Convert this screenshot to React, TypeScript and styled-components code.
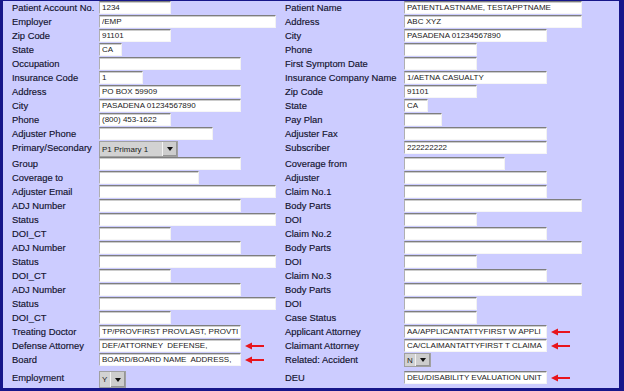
import React from 'react';
import styled, { createGlobalStyle } from 'styled-components';

const GlobalStyle = createGlobalStyle`
  html, body { margin: 0; padding: 0; background: #ccccff; }
  body { font-family: "Liberation Sans", Arial, sans-serif; }
  * { box-sizing: border-box; }
`;

const Frame = styled.div`
  width: 624px;
  height: 391px;
  overflow: hidden;
  background: #ccccff;
  border-style: solid;
  border-color: #16168a;
  border-width: 1px 5px 3px 3px;
  padding: 0 1px 0 9px;
  display: flex;
  flex-direction: column;
`;

const Row = styled.div<{ $h: number; $pad: number }>`
  display: grid;
  grid-template-columns: 87px 186px 119px 214px;
  height: ${(p) => p.$h}px;
  padding-top: ${(p) => p.$pad}px;
  align-items: start;
`;

const Label = styled.div`
  font-size: 9.4px;
  line-height: 14px;
  color: #12122e;
  white-space: nowrap;
  -webkit-text-stroke: 0.15px #12122e;
`;

const FieldCell = styled.div`
  display: flex;
  align-items: flex-start;
  gap: 4px;
`;

const TextBox = styled.input<{ $w: number }>`
  width: ${(p) => p.$w}px;
  height: 13px;
  margin: 0;
  padding: 0 2px;
  background: #ffffff;
  border-style: solid;
  border-width: 1px;
  border-color: #7e7e7e #f2f2f2 #f6f6f6 #b0b0b0;
  box-shadow: inset 0 1px 0 #cccccc;
  font-family: "Liberation Sans", Arial, sans-serif;
  font-size: 8px;
  color: #1a1a1a;
  outline: none;
`;

const SelectBox = styled.div<{ $h: number }>`
  display: inline-flex;
  height: ${(p) => p.$h}px;
  border: 1px solid #a0a0a0;
  background: #d2d2d2;
`;

const SelectValue = styled.div<{ $w: number }>`
  width: ${(p) => p.$w}px;
  display: flex;
  align-items: center;
  padding-left: 2px;
  font-size: 8px;
  color: #1a1a1a;
  white-space: nowrap;
  overflow: hidden;
`;

const SelectButton = styled.div`
  width: 15px;
  display: flex;
  align-items: center;
  justify-content: center;
  background: #cdcdcd;
  border-left: 1px solid #f2f2f2;
  box-shadow: inset -1px -1px 0 #959595;
`;

const Caret = styled.span`
  width: 0;
  height: 0;
  border-left: 3.5px solid transparent;
  border-right: 3.5px solid transparent;
  border-top: 4px solid #111;
`;

const ArrowMark = styled.svg`
  align-self: center;
  flex: none;
`;

type Field =
  | { kind: 'text'; w: number; v?: string; arrow?: boolean }
  | { kind: 'select'; vw: number; v: string; h: number; arrow?: boolean };

const t = (w: number, v = '', arrow = false): Field => ({ kind: 'text', w, v, arrow });
const s = (vw: number, v: string, h: number): Field => ({ kind: 'select', vw, v, h });

type RowDef = { l: string; lf: Field; r: string; rf: Field; h?: number; pad?: number };

const rows: RowDef[] = [
  { l: 'Patient Account No.', lf: t(72, '1234'), r: 'Patient Name', rf: t(178, 'PATIENTLASTNAME, TESTAPPTNAME') },
  { l: 'Employer', lf: t(177, '/EMP'), r: 'Address', rf: t(178, 'ABC XYZ') },
  { l: 'Zip Code', lf: t(72, '91101'), r: 'City', rf: t(143, 'PASADENA 01234567890') },
  { l: 'State', lf: t(23, 'CA'), r: 'Phone', rf: t(73) },
  { l: 'Occupation', lf: t(142), r: 'First Symptom Date', rf: t(73) },
  { l: 'Insurance Code', lf: t(44, '1'), r: 'Insurance Company Name', rf: t(143, '1/AETNA CASUALTY') },
  { l: 'Address', lf: t(142, 'PO BOX 59909'), r: 'Zip Code', rf: t(73, '91101') },
  { l: 'City', lf: t(142, 'PASADENA 01234567890'), r: 'State', rf: t(24, 'CA') },
  { l: 'Phone', lf: t(72, '(800) 453-1622'), r: 'Pay Plan', rf: t(38) },
  { l: 'Adjuster Phone', lf: t(114), r: 'Adjuster Fax', rf: t(143) },
  { l: 'Primary/Secondary', lf: s(62, 'P1 Primary 1', 16), r: 'Subscriber', rf: t(143, '222222222'), h: 16 },
  { l: 'Group', lf: t(142), r: 'Coverage from', rf: t(101) },
  { l: 'Coverage to', lf: t(100), r: 'Adjuster', rf: t(143) },
  { l: 'Adjuster Email', lf: t(177), r: 'Claim No.1', rf: t(143) },
  { l: 'ADJ Number', lf: t(142), r: 'Body Parts', rf: t(178) },
  { l: 'Status', lf: t(177), r: 'DOI', rf: t(73) },
  { l: 'DOI_CT', lf: t(72), r: 'Claim No.2', rf: t(143) },
  { l: 'ADJ Number', lf: t(142), r: 'Body Parts', rf: t(178) },
  { l: 'Status', lf: t(177), r: 'DOI', rf: t(73) },
  { l: 'DOI_CT', lf: t(72), r: 'Claim No.3', rf: t(143) },
  { l: 'ADJ Number', lf: t(142), r: 'Body Parts', rf: t(178) },
  { l: 'Status', lf: t(177), r: 'DOI', rf: t(73) },
  { l: 'DOI_CT', lf: t(72), r: 'Case Status', rf: t(73) },
  { l: 'Treating Doctor', lf: t(142, 'TP/PROVFIRST PROVLAST, PROVTI'), r: 'Applicant Attorney', rf: t(143, 'AA/APPLICANTATTYFIRST W APPLI', true) },
  { l: 'Defense Attorney', lf: t(142, 'DEF/ATTORNEY  DEFENSE,', true), r: 'Claimant Attorney', rf: t(143, 'CA/CLAIMANTATTYFIRST T CLAIMA', true) },
  { l: 'Board', lf: t(142, 'BOARD/BOARD NAME  ADDRESS,', true), r: 'Related: Accident', rf: s(10, 'N', 14) },
  { l: 'Employment', lf: s(10, 'Y', 17), r: 'DEU', rf: t(143, 'DEU/DISABILITY EVALUATION UNIT', true), h: 21, pad: 4 },
];

const Arrow = () => (
  <ArrowMark width="19" height="8" viewBox="0 0 19 8">
    <path d="M0 4 L7 0.5 L7 7.5 Z" fill="#e8141c" />
    <rect x="6" y="3" width="13" height="2" fill="#e8141c" />
  </ArrowMark>
);

const FieldView = ({ f }: { f: Field }) => (
  <FieldCell>
    {f.kind === 'text' ? (
      <TextBox $w={f.w} value={f.v} readOnly />
    ) : (
      <SelectBox $h={f.h}>
        <SelectValue $w={f.vw}>{f.v}</SelectValue>
        <SelectButton>
          <Caret />
        </SelectButton>
      </SelectBox>
    )}
    {f.arrow && <Arrow />}
  </FieldCell>
);

export default function App() {
  return (
    <>
      <GlobalStyle />
      <Frame>
        {rows.map((r, i) => (
          <Row key={i} $h={r.h ?? 14} $pad={r.pad ?? 0}>
            <Label>{r.l}</Label>
            <FieldView f={r.lf} />
            <Label>{r.r}</Label>
            <FieldView f={r.rf} />
          </Row>
        ))}
      </Frame>
    </>
  );
}
